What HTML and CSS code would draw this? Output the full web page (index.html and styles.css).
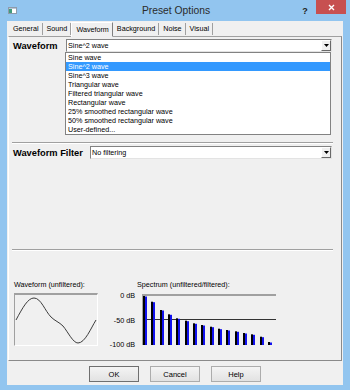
FILE: index.html
```html
<!DOCTYPE html>
<html lang="en">
<head>
    <meta charset="UTF-8">
    <title>Preset Options</title>
    <link rel="stylesheet" href="styles.css">
</head>
<body>

    <div class="window">
        <!-- Title bar -->
        <div class="titlebar">
            <div class="title-left">
                <svg class="app-icon" width="9" height="7" viewBox="0 0 9 7">
                    <rect x="0.5" y="0.5" width="8" height="6" fill="#fff" stroke="#8d9bab"/>
                    <rect x="1" y="2" width="3" height="4" fill="#3f9b7c"/>
                    <rect x="1" y="1" width="7" height="1" fill="#b9c7d6"/>
                </svg>
            </div>
            <div class="title">Preset Options</div>
            <div class="help">?</div>
            <div class="close">
                <svg width="7" height="7" viewBox="0 0 7 7">
                    <path d="M1 1 L6 6 M6 1 L1 6" stroke="#fff" stroke-width="1.4"/>
                </svg>
            </div>
        </div>

        <div class="client">
            <!-- Tabs -->
            <div class="tabs">
                <div class="tab">General</div>
                <div class="tab">Sound</div>
                <div class="tab tab-active">Waveform</div>
                <div class="tab">Background</div>
                <div class="tab">Noise</div>
                <div class="tab">Visual</div>
            </div>

            <div class="panel">
                <div class="field">
                    <label class="field-label">Waveform</label>
                    <div class="combo">
                        <span class="combo-value">Sine^2 wave</span>
                        <span class="combo-btn">
                            <svg width="5" height="3" viewBox="0 0 5 3"><path d="M0 0 H5 L2.5 3 Z" fill="#000"/></svg>
                        </span>
                        <!-- opened list -->
                        <ul class="dropdown">
                            <li>Sine wave</li>
                            <li class="selected">Sine^2 wave</li>
                            <li>Sine^3 wave</li>
                            <li>Triangular wave</li>
                            <li>Filtered triangular wave</li>
                            <li>Rectangular wave</li>
                            <li>25% smoothed rectangular wave</li>
                            <li>50% smoothed rectangular wave</li>
                            <li>User-defined...</li>
                        </ul>
                    </div>
                </div>

                <div class="sep"></div>

                <div class="field field-filter">
                    <label class="field-label">Waveform Filter</label>
                    <div class="combo">
                        <span class="combo-value">No filtering</span>
                        <span class="combo-btn">
                            <svg width="5" height="3" viewBox="0 0 5 3"><path d="M0 0 H5 L2.5 3 Z" fill="#000"/></svg>
                        </span>
                    </div>
                </div>

                <div class="sep"></div>

                <!-- Graphs -->
                <div class="graphs">
                    <div class="graph-wave">
                        <div class="graph-title">Waveform (unfiltered):</div>
                        <div class="wave-box">
                            <svg width="82" height="50" viewBox="0 0 82 50">
                                <path d="M1,25 C8,12 13,3 19,3 C26,3 30,16 36,22 C40,26 44,27 48,31 C53,37 58,48 63,48 C70,48 76,33 81,25" fill="none" stroke="#3c3c3c" stroke-width="1"/>
                            </svg>
                        </div>
                    </div>
                    <div class="graph-spectrum">
                        <div class="graph-title spectrum-title">Spectrum (unfiltered/filtered):</div>
                        <div class="spectrum-body">
                            <div class="axis">
                                <span>0 dB</span>
                                <span>-50 dB</span>
                                <span>-100 dB</span>
                            </div>
                            <div class="chart">
                                <svg width="133" height="49" viewBox="0 0 133 49">
                                    <line x1="0" y1="23.5" x2="133" y2="23.5" stroke="#333" stroke-width="1"/>
                                    <g id="bars"></g>
                                </svg>
                            </div>
                        </div>
                    </div>
                </div>
            </div>

            <div class="buttons">
                <button class="btn btn-default">OK</button>
                <button class="btn">Cancel</button>
                <button class="btn">Help</button>
            </div>
        </div>
    </div>

    <script>
        // bar tops for the spectrum, unfiltered (black) and filtered (blue)
        const tops = [0, 5.7, 14, 18.3, 22.3, 24.7, 27.3, 29, 30.7, 32.7, 34, 35.3, 37, 38.3, 40.7, 46];
        const bars = document.getElementById('bars');
        let html = '';
        tops.forEach((t, i) => {
            const x = Math.round(i * 8.33);
            html += `<rect x="${x}" y="${t}" width="2" height="${49 - t}" fill="#000"/>`;
            html += `<rect x="${x + 2}" y="${t + 0.5}" width="2" height="${48.5 - t}" fill="#1111ee"/>`;
        });
        bars.innerHTML = html;
    </script>

</body>
</html>
```

FILE: styles.css
```css
* {
    box-sizing: border-box;
}
body {
    margin: 0;
    font-family: "Liberation Sans", Arial, sans-serif;
    font-size: 7.2px;
    color: #000;
}
.window {
    width: 350px;
    height: 390px;
    background-color: #92c5ef;
    display: flex;
    flex-direction: column;
}
.titlebar {
    height: 21px;
    flex-shrink: 0;
    display: flex;
    align-items: center;
}
.title-left {
    width: 52px;
    padding-left: 8px;
    display: flex;
}
.title {
    flex: 1;
    text-align: center;
    font-size: 10.3px;
    color: #2b2b2b;
}
.help {
    width: 10px;
    margin-right: 6px;
    text-align: center;
    font-weight: bold;
    font-size: 9px;
    color: #222;
}
.close {
    width: 30px;
    height: 14px;
    margin-right: 4px;
    align-self: flex-start;
    background-color: #c75050;
    display: flex;
    align-items: center;
    justify-content: center;
}
.client {
    flex: 1;
    margin: 0 7px 5px;
    background-color: #f0f0f0;
    display: flex;
    flex-direction: column;
}
.tabs {
    height: 15px;
    padding-left: 2px;
    display: flex;
    align-items: flex-end;
}
.tab {
    height: 12px;
    line-height: 11px;
    padding: 0 3px 0 4px;
    margin-bottom: 1px;
    border-right: 1px solid #a0a0a0;
}
.tab-active {
    height: 15px;
    line-height: 13px;
    margin-bottom: -1px;
    border: 1px solid;
    border-color: #fff #808080 #f0f0f0 #fff;
    background-color: #f0f0f0;
    position: relative;
    z-index: 1;
}
.panel {
    height: 325px;
    margin: 0 1px;
    padding: 2px 9px 0 4px;
    border: 1px solid;
    border-color: #a0a0a0 #8a8a8a #8a8a8a #fff;
    display: flex;
    flex-direction: column;
}
.field {
    height: 13px;
    display: flex;
    align-items: center;
}
.field-label {
    width: 53px;
    font-weight: bold;
    font-size: 9.3px;
}
.field-filter {
    margin-top: 2px;
}
.field-filter .field-label {
    width: 77px;
}
.combo {
    flex: 1;
    height: 13px;
    position: relative;
    background-color: #fff;
    border: 1px solid;
    border-color: #828282 #e3e3e3 #e3e3e3 #828282;
    display: flex;
    align-items: center;
}
.combo-value {
    padding-left: 1px;
}
.combo-btn {
    width: 10px;
    height: 11px;
    margin-left: auto;
    background-color: #f0f0f0;
    border: 1px solid;
    border-color: #fff #696969 #696969 #fff;
    display: flex;
    align-items: center;
    justify-content: center;
}
.dropdown {
    position: absolute;
    top: 12px;
    left: -2px;
    right: 0;
    margin: 0;
    padding: 0;
    list-style: none;
    background-color: #fff;
    border: 1px solid #828282;
    z-index: 2;
}
.dropdown li {
    height: 9px;
    line-height: 9px;
    padding-left: 2px;
}
.dropdown .selected {
    background-color: #3399ff;
    color: #fff;
}
.sep {
    height: 2px;
    margin: 90px -1px 0;
    border-top: 1px solid #a0a0a0;
    border-bottom: 1px solid #fff;
}
.graphs {
    margin-top: 29px;
    display: flex;
}
.graph-title {
    height: 9px;
    line-height: 9px;
    margin-bottom: 4px;
}
.graph-wave {
    width: 84px;
    margin-left: 1px;
}
.wave-box {
    height: 53px;
    border-top: 2px solid #a0a0a0;
    border-left: 1px solid #a0a0a0;
    border-right: 1px solid #fff;
    border-bottom: 1px solid #fff;
}
.wave-box svg {
    display: block;
}
.graph-spectrum {
    margin-left: 9px;
}
.spectrum-title {
    padding-left: 30px;
}
.spectrum-body {
    display: flex;
    align-items: flex-start;
}
.axis {
    width: 28px;
    height: 58px;
    margin-top: -2px;
    margin-right: 7px;
    text-align: right;
    display: flex;
    flex-direction: column;
    justify-content: space-between;
    line-height: 9px;
}
.chart {
    width: 134px;
    height: 51px;
    margin-top: 1px;
    border-top: 2px solid #a0a0a0;
    border-left: 1px solid #a0a0a0;
}
.chart svg {
    display: block;
}
.buttons {
    margin-top: 5px;
    display: flex;
    justify-content: center;
    gap: 11px;
}
.btn {
    width: 50px;
    height: 16px;
    padding: 0;
    font-family: "Liberation Sans", Arial, sans-serif;
    font-size: 7.5px;
    color: #000;
    background: linear-gradient(#f4f4f4, #e2e2e2);
    border: 1px solid #acacac;
}
.btn-default {
    border-color: #6f6f6f;
}
```
